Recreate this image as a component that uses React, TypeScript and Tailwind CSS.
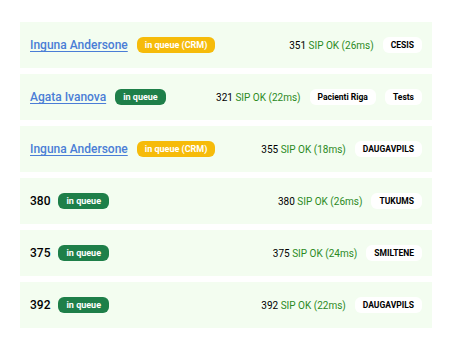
import React from "react";

type Row = {
  name?: string;
  num: string;
  crm?: boolean;
  ext: string;
  ms: string;
  tags: string[];
};

const rows: Row[] = [
  { name: "Inguna Andersone", num: "351", crm: true, ext: "351", ms: "26ms", tags: ["CESIS"] },
  { name: "Agata Ivanova", num: "321", ext: "321", ms: "22ms", tags: ["Pacienti Riga", "Tests"] },
  { name: "Inguna Andersone", num: "355", crm: true, ext: "355", ms: "18ms", tags: ["DAUGAVPILS"] },
  { num: "380", ext: "380", ms: "26ms", tags: ["TUKUMS"] },
  { num: "375", ext: "375", ms: "24ms", tags: ["SMILTENE"] },
  { num: "392", ext: "392", ms: "22ms", tags: ["DAUGAVPILS"] },
];

const QueueBadge = ({ crm }: { crm?: boolean }) =>
  crm ? (
    <span className="h-4 px-[8px] rounded-[6px] bg-[#f6bb0a] text-white text-[9px] font-bold leading-4 whitespace-nowrap">
      in queue (CRM)
    </span>
  ) : (
    <span className="h-4 px-[8px] rounded-[6px] bg-[#1e7f49] text-white text-[9px] font-bold leading-4 whitespace-nowrap">
      in queue
    </span>
  );

const App = () => {
  return (
    <div
      className="w-[452px] h-[348px] bg-white pt-[22px] px-5"
      style={{ fontFamily: "Roboto, 'Liberation Sans', sans-serif" }}
    >
      <div className="flex flex-col gap-[6px] w-[412px]">
        {rows.map((r, i) => (
          <div
            key={i}
            className="h-[46px] bg-[#f3fdf0] flex items-center px-[10px]"
          >
            <div className="flex items-center gap-2">
              {r.name ? (
                <a className="text-[12px] font-medium text-[#4a7dd6] underline underline-offset-2 mr-px">
                  {r.name}
                </a>
              ) : (
                <span className="text-[12px] font-medium text-black">{r.num}</span>
              )}
              <QueueBadge crm={r.crm} />
            </div>
            <div className="ml-auto flex items-center gap-[9px]">
              <span className="text-[10px] text-black">
                {r.ext} <span className="text-[#2b8a1e]">SIP OK ({r.ms})</span>
              </span>
              {r.tags.map((t) => (
                <span
                  key={t}
                  className="h-4 px-2 rounded-[6px] bg-white text-black text-[8.5px] font-bold leading-4 whitespace-nowrap"
                >
                  {t}
                </span>
              ))}
            </div>
          </div>
        ))}
      </div>
    </div>
  );
};

export default App;
